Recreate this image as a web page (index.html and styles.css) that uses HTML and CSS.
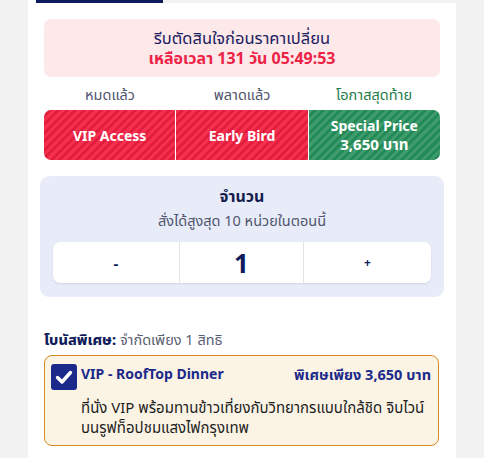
FILE: index.html
```html
<!DOCTYPE html>
<html lang="th">
<head>
<meta charset="utf-8">
<link rel="stylesheet" href="styles.css">
</head>
<body>
<div class="card">
  <div class="tabs"><span class="tab-gap"></span><span class="tab-active"></span><span class="tab-rest"></span></div>
  <div class="content">
    <div class="alert">
      <div class="alert-title">รีบตัดสินใจก่อนราคาเปลี่ยน</div>
      <div class="alert-time">เหลือเวลา 131 วัน 05:49:53</div>
    </div>
    <div class="labels">
      <span class="label">หมดแล้ว</span>
      <span class="label">พลาดแล้ว</span>
      <span class="label label-green">โอกาสสุดท้าย</span>
    </div>
    <div class="tiers">
      <div class="tier tier-red">VIP Access</div>
      <div class="tier tier-red">Early Bird</div>
      <div class="tier tier-green"><span>Special Price</span><span class="tier-price">3,650 บาท</span></div>
    </div>
    <div class="qty">
      <div class="qty-title">จำนวน</div>
      <div class="qty-sub">สั่งได้สูงสุด 10 หน่วยในตอนนี้</div>
      <div class="stepper">
        <div class="step-btn">-</div>
        <div class="step-val">1</div>
        <div class="step-btn step-plus">+</div>
      </div>
    </div>
    <div class="bonus-label"><b>โบนัสพิเศษ:</b> จำกัดเพียง 1 สิทธิ</div>
    <div class="bonus">
      <div class="check">
        <svg width="26" height="26" viewBox="0 0 26 26"><rect width="26" height="26" rx="3" fill="#1b2a8a"/><path d="M6.5 13.5 L11 18 L19.5 8.5" fill="none" stroke="#fff" stroke-width="3.4" stroke-linecap="round" stroke-linejoin="round"/></svg>
      </div>
      <div class="bonus-body">
        <div class="bonus-head">
          <span class="bonus-name">VIP - RoofTop Dinner</span>
          <span class="bonus-price">พิเศษเพียง 3,650 บาท</span>
        </div>
        <div class="bonus-desc">ที่นั่ง VIP พร้อมทานข้าวเที่ยงกับวิทยากรแบบใกล้ชิด จิบไวน์บนรูฟท็อปชมแสงไฟกรุงเทพ</div>
      </div>
    </div>
  </div>
</div>
</body>
</html>
```
FILE: styles.css
```css
* { box-sizing: border-box; }
html, body { margin: 0; padding: 0; }
body {
  background: #f2f2f2;
  font-family: "Noto Sans", "Noto Sans Thai", sans-serif;
  color: #1a2060;
  width: 484px;
  height: 458px;
  overflow: hidden;
}
.card {
  margin-left: 28px;
  width: 428px;
  height: 458px;
  background: #fff;
}
.tabs { display: flex; height: 3px; }
.tab-gap { width: 8px; background: #fff; }
.tab-active { width: 127px; background: #0c1b5e; }
.tab-rest { flex: 1; background: #f2f2f2; }
.content { padding: 16px 16px 0; }
.alert {
  background: #fde8ea;
  border-radius: 7px;
  height: 58px;
  display: flex;
  flex-direction: column;
  align-items: center;
  justify-content: center;
}
.alert-title { font-size: 16.5px; line-height: 21px; color: #1a2060; }
.alert-time { font-size: 16px; line-height: 21px; font-weight: 700; color: #ec2346; }
.labels {
  display: grid;
  grid-template-columns: 1fr 1fr 1fr;
  margin-top: 7px;
  height: 20px;
  line-height: 20px;
  text-align: center;
  font-size: 14.5px;
  color: #4f556e;
}
.label-green { color: #1f7d4c; }
.tiers {
  display: grid;
  grid-template-columns: 1fr 1fr 1fr;
  gap: 1px;
  margin-top: 6px;
  height: 50px;
}
.tier {
  display: flex;
  flex-direction: column;
  align-items: center;
  justify-content: center;
  text-align: center;
  color: #fff;
  font-weight: 700;
  font-size: 14px;
  line-height: 19px;
}
.tier-price { font-size: 15px; }
.tier-red {
  background: repeating-linear-gradient(135deg, #f5304f 0 3px, #e21d3e 3px 6px);
}
.tier-red:first-child { border-radius: 7px 0 0 7px; }
.tier-green {
  background: repeating-linear-gradient(135deg, #3f9a6c 0 3px, #218a56 3px 6px);
  border-radius: 0 7px 7px 0;
}
.qty {
  margin: 16px -4px 0;
  background: #e8ecf8;
  border-radius: 9px;
  padding: 10px 13px 14px;
  text-align: center;
}
.qty-title { font-size: 16px; font-weight: 700; line-height: 20px; color: #151d4f; }
.qty-sub { font-size: 14.5px; line-height: 20px; color: #4f556e; margin-top: 4px; }
.stepper {
  margin-top: 12px;
  height: 41px;
  background: #fff;
  border-radius: 7px;
  box-shadow: 0 1px 2px rgba(40, 50, 90, 0.12);
  display: grid;
  grid-template-columns: 126px 125px 1fr;
}
.stepper > div {
  display: flex;
  align-items: center;
  justify-content: center;
  color: #0f1c5c;
  font-weight: 700;
}
.step-btn { font-size: 15px; }
.step-plus { font-size: 12px; }
.step-val {
  font-size: 26px;
  border-left: 1px solid #e2e4ea;
  border-right: 1px solid #e2e4ea;
}
.bonus-label {
  margin-top: 32px;
  font-size: 14.5px;
  line-height: 20px;
  color: #5a6070;
}
.bonus-label b { color: #0f1c5c; font-weight: 800; }
.bonus {
  margin-top: 6px;
  width: 395px;
  height: 91px;
  background: #fbf3e4;
  border: 1px solid #d58a22;
  border-radius: 8px;
  padding: 8px 7px 8px 6px;
  display: flex;
  gap: 4px;
}
.check { width: 26px; height: 26px; flex: none; }
.check svg { display: block; }
.bonus-body { flex: 1; }
.bonus-head {
  display: flex;
  justify-content: space-between;
  font-weight: 700;
  font-size: 14.5px;
  line-height: 20px;
  color: #1b2a8a;
}
.bonus-name { font-size: 14px; }
.bonus-desc {
  margin-top: 13px;
  font-size: 15px;
  line-height: 20px;
  color: #1e1e1e;
}
```
